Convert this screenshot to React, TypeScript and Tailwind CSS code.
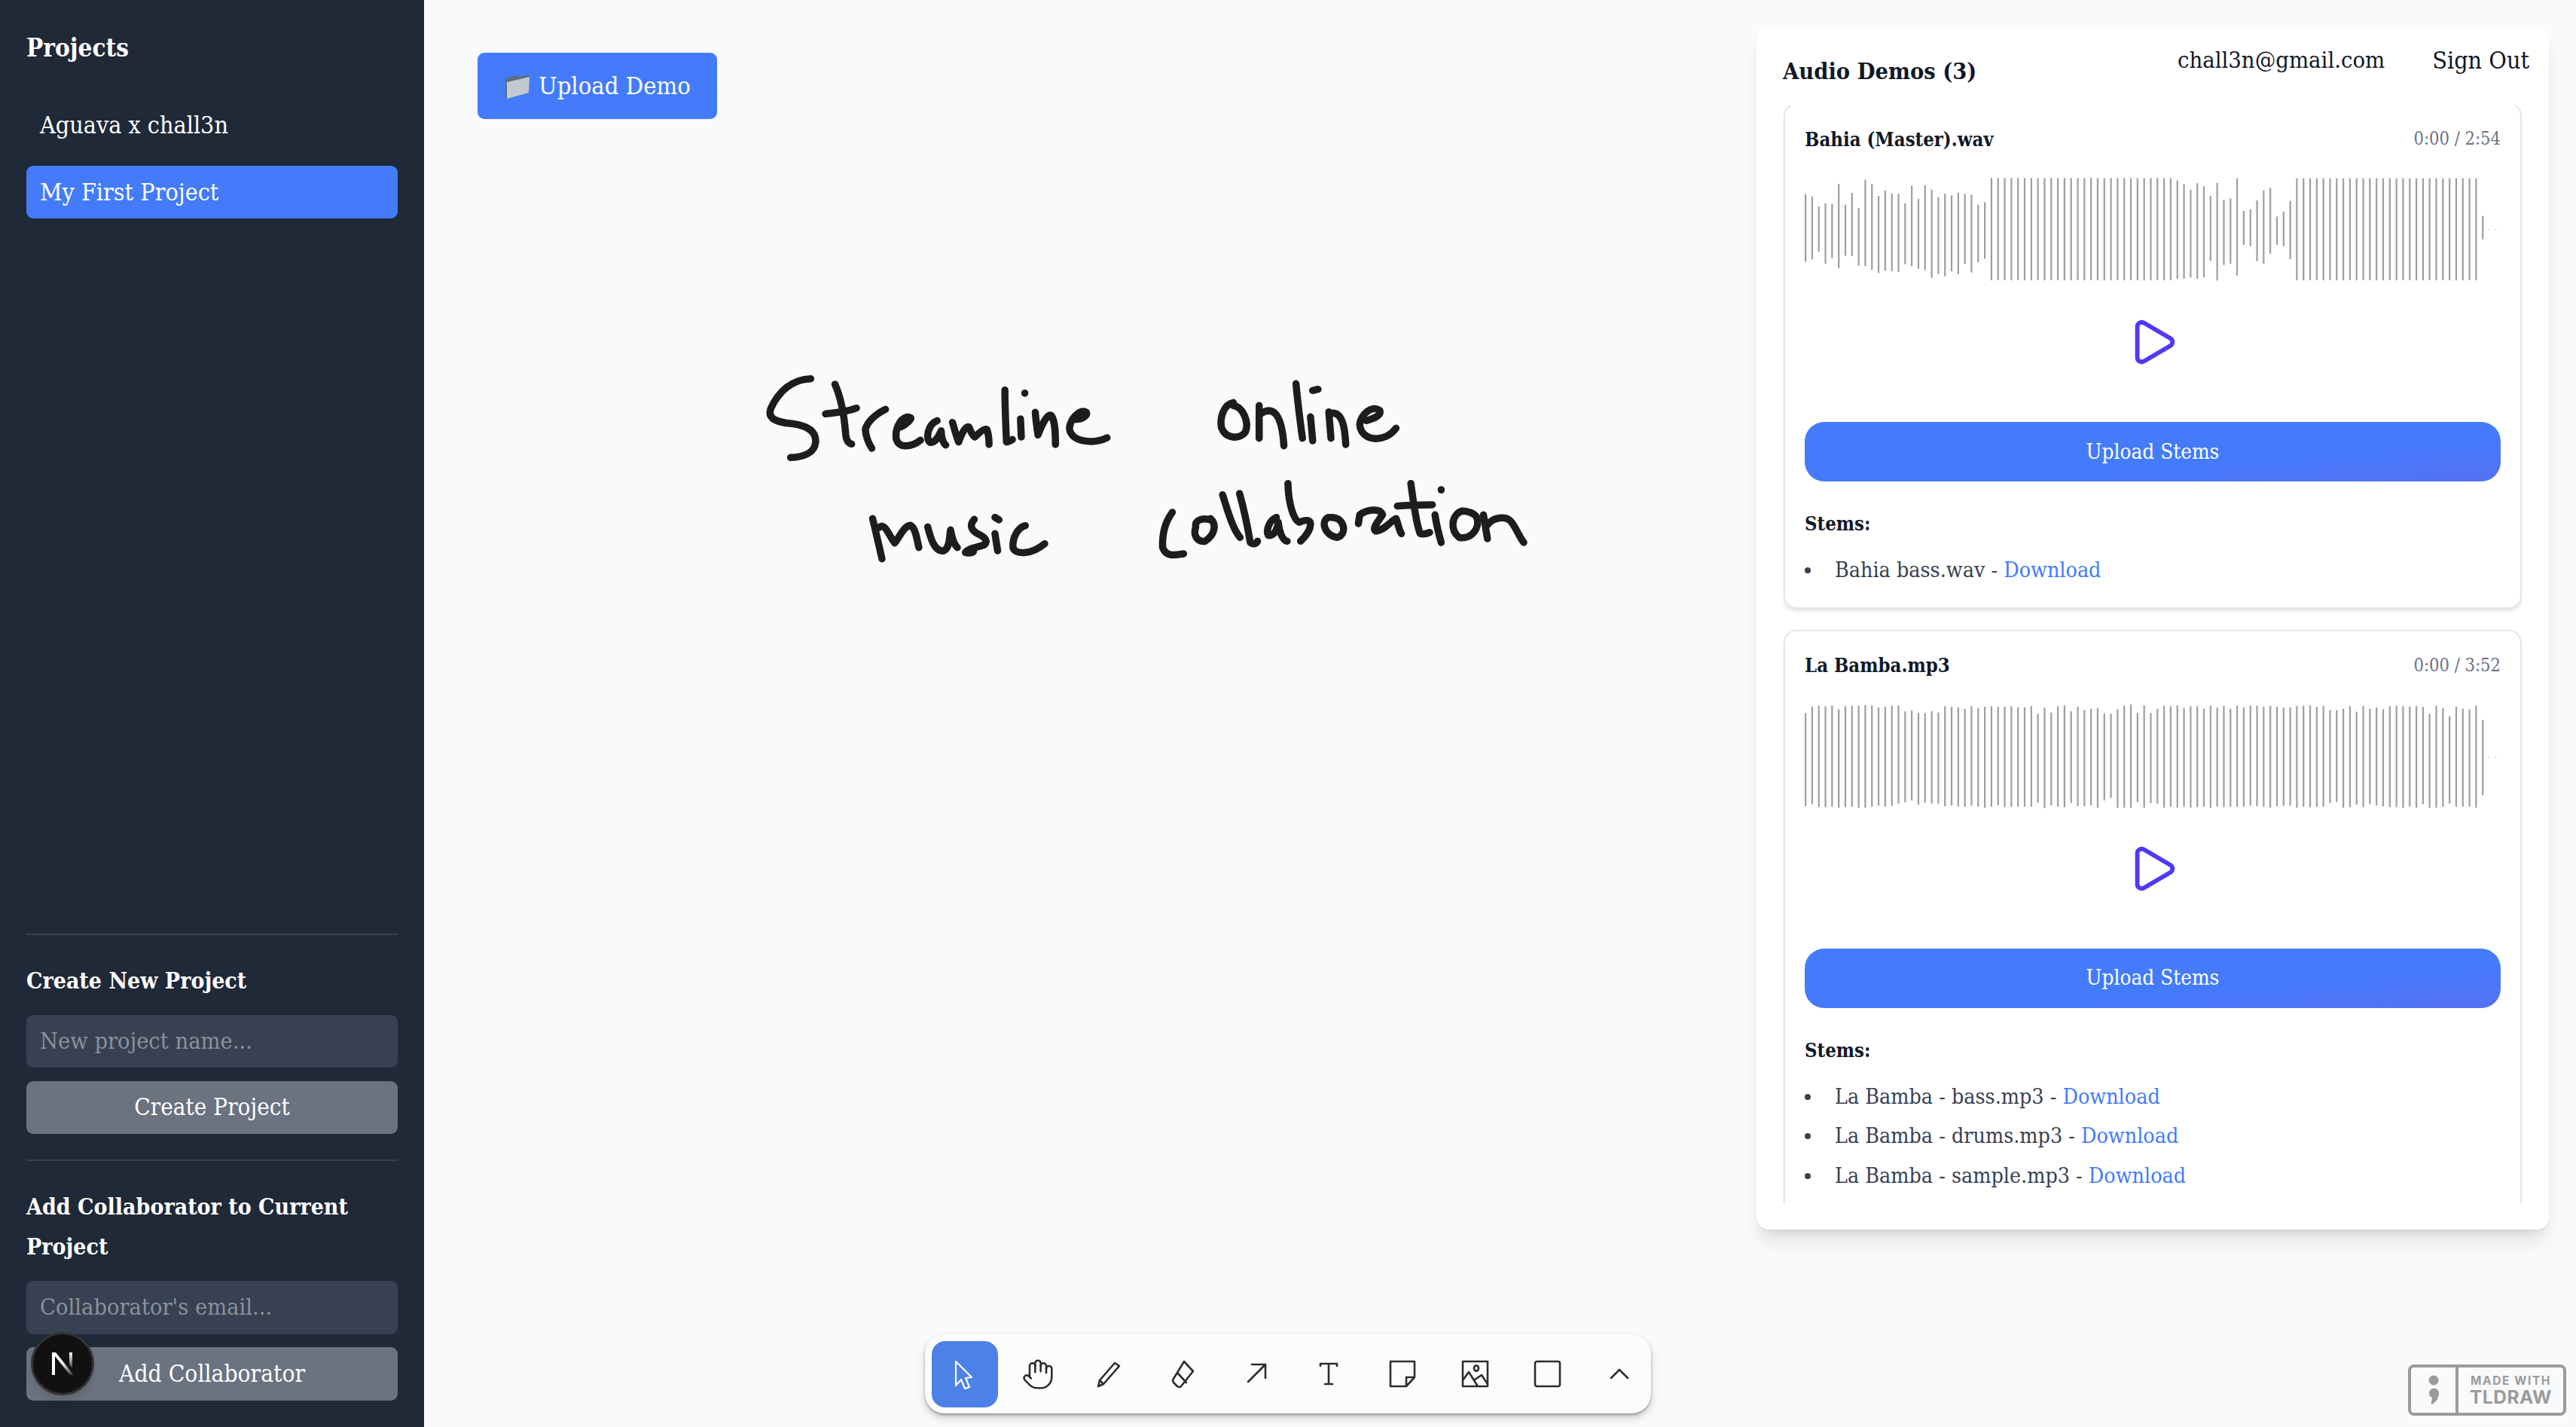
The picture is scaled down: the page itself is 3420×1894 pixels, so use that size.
import { Hand, Play } from "lucide-react";

const bahiaBars: number[][] = [
  [713, 982], [722, 973], [762, 942], [750, 990], [752, 968], [673, 1008], [755, 958], [708, 960], [768, 998], [655, 1000],
  [673, 1015], [720, 1027], [698, 1018], [710, 1020], [712, 1023], [750, 992], [680, 1000], [732, 1010], [678, 1015], [695, 1047],
  [725, 1032], [712, 1040], [718, 1020], [708, 1032], [712, 990], [715, 1025], [755, 985], [745, 970],
  ...Array.from({ length: 28 }, () => [649, 1056]),
  [658, 1050], [673, 1050], [695, 1045], [670, 1050], [682, 1045], [720, 978], [668, 1057], [735, 995], [730, 990], [650, 1037],
  [780, 915], [773, 920], [738, 980], [698, 990], [688, 950], [802, 915], [782, 920], [740, 972],
  ...Array.from({ length: 28 }, () => [650, 1056]),
  [800, 893],
];

const bambaBars: number[][] = [
  [197, 568], [172, 560], [168, 572], [170, 572], [167, 570], [182, 574], [170, 572], [168, 570], [168, 574], [165, 574],
  [168, 570], [175, 566], [173, 570], [168, 567], [167, 558], [190, 553], [187, 545], [197, 563], [197, 555], [190, 558],
  [195, 558], [170, 568], [173, 565], [175, 570], [180, 570], [170, 566], [178, 570], [172, 574], [170, 570], [172, 565],
  [172, 572], [170, 570], [174, 570], [175, 570], [170, 570], [200, 555], [176, 575], [195, 565], [170, 570], [167, 572],
  [190, 555], [172, 568], [185, 568], [180, 565], [178, 574], [198, 545], [200, 535], [182, 574], [168, 574], [163, 574],
  [197, 552], [167, 574], [197, 556], [180, 558], [168, 574], [170, 570], [167, 574], [177, 570], [170, 574], [170, 572],
  [180, 570], [168, 574], [176, 570], [168, 572], [180, 570], [168, 570], [175, 570], [168, 566], [168, 568], [172, 570],
  [168, 574], [172, 568], [175, 566], [175, 566], [170, 574], [168, 570], [167, 572], [172, 570], [168, 570], [185, 555],
  [185, 552], [180, 574], [170, 572], [192, 562], [168, 572], [180, 560], [175, 565], [182, 568], [170, 572], [168, 572],
  [170, 574], [172, 570], [170, 574], [172, 560], [200, 574], [168, 574], [178, 570], [210, 558], [172, 570], [180, 570],
  [182, 570], [167, 574], [225, 525],
];

// bars are measured off the screenshot, so base is the wave's top edge
const Waveform = ({ bars, base, dotY }: { bars: number[][]; base: number; dotY: number }) => (
  <svg width="924" height="138" className="block">
    {bars.map(([top, bottom], i) => (
      <rect key={i} x={i * 8.815} y={(top - base) / 3} width="2.2" height={(bottom - top) / 3} fill="#9e9e9e" />
    ))}
    <rect x={bars.length * 8.815} y={dotY} width="1.6" height="1.6" fill="#c4c4c4" />
    <rect x={(bars.length + 1) * 8.815} y={dotY} width="1.6" height="1.6" fill="#c4c4c4" />
  </svg>
);

const DemoCard = ({
  name,
  time,
  bars,
  base,
  dotY,
  stems,
}: {
  name: string;
  time: string;
  bars: number[][];
  base: number;
  dotY: number;
  stems: string[];
}) => (
  <div className="rounded-[17px] border-2 border-[#e5e7eb] bg-white px-[26px] pt-[27px] pb-[22px] shadow-md">
    <div className="flex h-[38px] items-center justify-between">
      <span className="text-[25.5px] font-semibold text-[#111827]">{name}</span>
      <span className="text-[23.5px] text-[#6b7280]">{time}</span>
    </div>
    <div className="mt-[32px]">
      <Waveform bars={bars} base={base} dotY={dotY} />
    </div>
    <div className="mt-[45px] flex justify-center">
      <Play size={70} strokeWidth={2} className="text-indigo-600" />
    </div>
    <button className="mt-[71px] h-[79px] w-full rounded-[26px] bg-gradient-to-br from-[#437bfb] from-60% to-[#5570f5] text-[27.7px] text-white">
      Upload Stems
    </button>
    <div className="mt-[36px] h-[40px] text-[25.5px] leading-[40px] font-semibold text-[#111827]">Stems:</div>
    <ul className="mt-[16px] text-[28.4px] leading-[52.5px] text-[#374151]">
      {stems.map((s) => (
        <li key={s} className="flex items-center">
          <span className="mr-[32px] h-[8px] w-[8px] rounded-full bg-[#374151]" />
          <span>
            {s} - <a className="text-[#437bfb]">Download</a>
          </span>
        </li>
      ))}
    </ul>
  </div>
);

const Sketch = () => (
  <svg
    className="absolute top-0 left-0"
    width="1600"
    height="800"
    viewBox="563 0 1600 800"
    fill="none"
    stroke="#1d1d1d"
    strokeLinecap="round"
    strokeLinejoin="round"
  >
    <g transform="translate(980 470) scale(0.357 0.3333)" strokeWidth="9.5">
      <path vectorEffect="non-scaling-stroke" d="M270 98 C200 100 150 150 122 215 C105 260 150 272 200 277 C260 285 290 310 288 350 C285 395 240 410 195 412" />
      <path vectorEffect="non-scaling-stroke" d="M360 120 C385 180 395 250 400 320 C402 340 410 355 422 358 M325 238 C360 232 400 232 440 215" />
      <path vectorEffect="non-scaling-stroke" d="M548 220 C510 240 480 270 473 300 C475 330 488 360 497 375" />
      <path vectorEffect="non-scaling-stroke" d="M605 290 C625 280 650 255 640 253 C610 240 585 290 587 330 C590 375 640 375 678 343" />
      <path vectorEffect="non-scaling-stroke" d="M740 265 C705 280 695 340 715 352 C740 350 748 320 755 305 C755 330 762 355 772 362" />
      <path vectorEffect="non-scaling-stroke" d="M797 272 C805 300 812 330 820 350 C830 320 845 285 858 290 C865 305 870 325 880 330 C895 315 915 295 925 300 C932 320 933 340 933 360" />
      <path vectorEffect="non-scaling-stroke" d="M992 143 C992 210 995 280 998 350 C1005 350 1012 345 1020 340" />
      <path vectorEffect="non-scaling-stroke" d="M1050 258 L1053 330 M1066 155 L1066 156" />
      <path vectorEffect="non-scaling-stroke" d="M1105 232 C1108 270 1112 300 1115 322 C1130 280 1150 235 1165 245 C1180 270 1180 320 1180 360" />
      <path vectorEffect="non-scaling-stroke" d="M1255 260 C1280 260 1300 245 1295 232 C1270 215 1235 260 1232 295 C1235 350 1320 360 1372 333" />
      <path vectorEffect="non-scaling-stroke" d="M500 655 C515 720 525 770 535 815 M525 690 C545 670 560 720 582 752 C600 730 615 685 640 682 C660 690 665 740 672 770" />
      <path vectorEffect="non-scaling-stroke" d="M705 688 C715 730 730 790 765 783 C790 770 785 720 790 700 C795 730 805 760 815 770" />
      <path vectorEffect="non-scaling-stroke" d="M878 658 C860 680 865 700 890 715 C920 730 930 745 915 760 C890 770 860 770 845 790 C860 795 875 790 875 785" />
      <path vectorEffect="non-scaling-stroke" d="M955 715 L965 783 M955 650 L970 660" />
      <path vectorEffect="non-scaling-stroke" d="M1068 683 C1040 690 1020 730 1022 770 C1030 800 1090 800 1140 755" />
    </g>
    <g transform="translate(1500 470) scale(0.357 0.3333)" strokeWidth="9.5">
      <path vectorEffect="non-scaling-stroke" d="M385 193 C350 200 335 250 340 290 C355 340 410 340 430 310 C445 270 420 210 385 205" />
      <path vectorEffect="non-scaling-stroke" d="M481 205 L481 335 M490 235 C530 210 565 230 573 365" />
      <path vectorEffect="non-scaling-stroke" d="M618 118 C625 200 635 280 642 335 M672 250 L680 345 M680 145 L700 140" />
      <path vectorEffect="non-scaling-stroke" d="M740 230 L748 335 M750 235 C790 230 800 290 803 360" />
      <path vectorEffect="non-scaling-stroke" d="M880 265 C910 255 935 245 930 225 C900 200 860 240 855 280 C860 350 950 355 990 295" />
      <path vectorEffect="non-scaling-stroke" d="M158 630 C130 670 120 720 122 770 C135 810 170 800 200 795" />
      <path vectorEffect="non-scaling-stroke" d="M300 660 C270 650 240 660 245 690 C235 720 250 750 280 745 C315 720 325 680 300 655" />
      <path vectorEffect="non-scaling-stroke" d="M345 560 C365 630 385 700 410 730 M408 555 C425 620 440 700 448 750 C460 760 470 755 475 745" />
      <path vectorEffect="non-scaling-stroke" d="M545 650 C520 660 505 700 515 722 C540 725 550 690 552 670 C555 700 565 740 585 745" />
      <path vectorEffect="non-scaling-stroke" d="M588 515 C590 600 610 660 630 670 C690 640 680 700 635 745" />
      <path vectorEffect="non-scaling-stroke" d="M740 650 C710 660 720 720 770 730 C810 720 800 650 750 650" />
      <path vectorEffect="non-scaling-stroke" d="M850 675 L855 640 C880 620 930 610 940 640 C920 670 900 695 915 705 C950 700 970 665 990 655 C1000 680 1000 700 1010 715" />
      <path vectorEffect="non-scaling-stroke" d="M1045 515 C1055 590 1065 680 1080 715 C1095 720 1105 715 1115 710 M995 605 C1040 600 1090 600 1125 600" />
      <path vectorEffect="non-scaling-stroke" d="M1135 640 C1140 680 1150 720 1158 750 M1158 540 L1158 541" />
      <path vectorEffect="non-scaling-stroke" d="M1235 625 C1195 640 1190 700 1225 730 C1270 740 1305 690 1290 650 C1280 630 1250 625 1235 625" />
      <path vectorEffect="non-scaling-stroke" d="M1315 640 L1330 735 M1330 680 C1350 650 1400 640 1420 670 C1440 700 1450 730 1465 750" />
    </g>
  </svg>
);

const ToolIcon = ({ children }: { children: React.ReactNode }) => (
  <svg width="40" height="40" viewBox="0 0 40 40" fill="none" stroke="#2d2d2d" strokeWidth="2.6" strokeLinejoin="round" strokeLinecap="round">
    {children}
  </svg>
);

const tools = [
  <Hand key="hand" size={44} strokeWidth={1.4} color="#2d2d2d" />,
  <ToolIcon key="pencil">
    <path d="M4 36 L6 28 L26 5 L32 9 L11 33 Z M6 28 L11 33" />
  </ToolIcon>,
  <ToolIcon key="eraser">
    <path d="M21 3 L33 16 L17 36 Q15 38 12 36 L7 31 Q5 28 7 26 Z M13 19 L24 31" />
  </ToolIcon>,
  <ToolIcon key="arrow">
    <path d="M9 30 L32 7 M14 7 L32 7 L32 25" />
  </ToolIcon>,
  <ToolIcon key="text">
    <path d="M9 9 L9 6 L31 6 L31 9 M20 6 L20 33 M15 33 L25 33" />
  </ToolIcon>,
  <ToolIcon key="note">
    <path d="M5 3 L37 3 L37 24 L26 36 L5 36 Z M37 24 L26 24 L26 36" />
  </ToolIcon>,
  <ToolIcon key="image">
    <path d="M4 3 L37 3 L37 36 L4 36 Z M4 28 L12 17 L24 36 M20 27 L29 21 L37 33" />
    <ellipse cx="22" cy="12" rx="3" ry="3.6" />
  </ToolIcon>,
  <ToolIcon key="rect">
    <rect x="3" y="3" width="33" height="33" rx="2.5" />
  </ToolIcon>,
];

export default function App() {
  return (
    <div className="relative flex h-screen w-full overflow-hidden bg-[#f9fafc] font-['DejaVu_Serif_Condensed','DejaVu_Serif',serif]">
      <aside className="flex w-[563px] shrink-0 flex-col bg-[#1f2937] p-[35px] text-white">
        <h2 className="flex h-[58px] items-center text-[33px] font-bold">Projects</h2>
        <div className="mt-[38px] flex h-[70px] items-center rounded-[9px] px-[18px] text-[32px]">Aguava x chall3n</div>
        <div className="mt-[19px] flex h-[70px] items-center rounded-[9px] bg-[#437bfb] px-[18px] text-[32px]">My First Project</div>

        <div className="mt-auto border-t-2 border-[#374151] pt-[34px]">
          <h3 className="h-[53px] text-[30px] leading-[53px] font-bold">Create New Project</h3>
          <input
            className="mt-[19px] h-[70px] w-full rounded-[9px] bg-[#374151] px-[18px] pb-[2px] text-[30.5px] placeholder:text-[#8b919c]"
            placeholder="New project name..."
          />
          <button className="mt-[18px] h-[70px] w-full rounded-[9px] bg-[#6b7280] pb-[2px] text-[31.2px]">Create Project</button>
        </div>

        <div className="mt-[34px] border-t-2 border-[#374151] pt-[34px]">
          <h3 className="text-[30px] leading-[53px] font-bold">Add Collaborator to Current Project</h3>
          <input
            className="mt-[19px] h-[71px] w-full rounded-[9px] bg-[#374151] px-[18px] pb-[2px] text-[30.5px] placeholder:text-[#8b919c]"
            placeholder="Collaborator's email..."
          />
          <button className="mt-[17px] h-[71px] w-full rounded-[9px] bg-[#6b7280] text-[31.5px]">Add Collaborator</button>
        </div>
      </aside>

      <main className="relative flex-1">
        <Sketch />

        <button className="absolute top-[70px] left-[71px] flex h-[88px] w-[318px] items-center gap-[11px] rounded-[9px] bg-[#437bfb] pl-[36px] text-[32.5px] font-medium text-white">
          <svg width="34" height="34" viewBox="0 0 34 34">
            <path d="M1 8 L1 34 L32 26 L33 2 L20 5 L16 3 L5 6 Z" fill="#5d6b7e" />
            <path d="M3 12 L33 5 L32 26 L3 34 Z" fill="#c3c9d0" />
          </svg>
          Upload Demo
        </button>

        <div className="absolute top-[35px] right-[36px] flex h-[1597px] w-[1052px] flex-col rounded-[17px] bg-white p-[35px] shadow-xl">
          <h2 className="flex h-[50px] shrink-0 items-center text-[30.5px] font-bold text-[#111827]">Audio Demos (3)</h2>
          <div className="mt-[20px] min-h-0 flex-1 overflow-hidden">
            <div className="-mt-[3px] flex flex-col gap-[28px] px-px">
              <DemoCard
                name="Bahia (Master).wav"
                time="0:00 / 2:54"
                bars={bahiaBars}
                base={648}
                dotY={68}
                stems={["Bahia bass.wav"]}
              />
              <DemoCard
                name="La Bamba.mp3"
                time="0:00 / 3:52"
                bars={bambaBars}
                base={163}
                dotY={69}
                stems={["La Bamba - bass.mp3", "La Bamba - drums.mp3", "La Bamba - sample.mp3"]}
              />
            </div>
          </div>
        </div>

        <div className="absolute top-[56px] right-[62px] flex items-center gap-[63px] text-[#111827]">
          <span className="text-[30.7px]">chall3n@gmail.com</span>
          <span className="text-[32px]">Sign Out</span>
        </div>

        <div className="absolute bottom-[18px] left-[665px] flex h-[105px] items-center gap-[8.7px] rounded-[26px] bg-[#fcfcfc] pl-[9px] shadow-[0_2px_3px_rgba(0,0,0,0.3),0_6px_12px_rgba(0,0,0,0.18)]">
          <div className="flex h-[88px] w-[88px] items-center justify-center rounded-[18px] bg-[#4c81e8]">
            <svg width="40" height="40" viewBox="0 0 40 40" fill="none" stroke="#fff" strokeWidth="2.2" strokeLinejoin="round">
              <path d="M8 3 L8 35 L15 27 L20 39 L26 37 L21 25 L29 24 Z" />
            </svg>
          </div>
          {tools.map((icon, i) => (
            <div key={i} className="flex h-[88px] w-[88px] items-center justify-center">
              {icon}
            </div>
          ))}
          <div className="flex h-[88px] w-[85px] items-center justify-center">
            <ToolIcon>
              <path d="M9 25 L20 14 L31 25" />
            </ToolIcon>
          </div>
        </div>

        <div className="absolute right-[13px] bottom-[15px] flex h-[68px] w-[210px] rounded-[8px] border-4 border-[#9b9b9b] font-['Inter',sans-serif] font-bold text-[#9b9b9b]">
          <div className="flex w-[63px] items-center justify-center border-r-4 border-[#9b9b9b]">
            <svg width="14" height="40" viewBox="0 0 14 40" fill="#9b9b9b">
              <circle cx="7" cy="7" r="6.5" />
              <path d="M1 24 a6.5 6.5 0 0 1 13 0 C14 31 9 37 5 39 C3 39 4 36 5 30 C2 29 1 27 1 24 Z" />
            </svg>
          </div>
          <div className="flex flex-1 flex-col items-center justify-center">
            <span className="text-[15.5px] leading-[19px] tracking-[1.6px]">MADE WITH</span>
            <span className="text-[24.5px] leading-[25px] tracking-[0.5px]">TLDRAW</span>
          </div>
        </div>
      </main>

      <div className="absolute top-[1768px] left-[41px] flex h-[84px] w-[84px] items-center justify-center rounded-full border-[3px] border-[#333] bg-[#111] shadow-lg">
        <svg width="36" height="36" viewBox="0 0 36 36">
          <defs>
            <linearGradient id="nfade" x1="0" y1="0" x2="1" y2="1">
              <stop offset="0.45" stopColor="#fff" />
              <stop offset="1" stopColor="#fff" stopOpacity="0.1" />
            </linearGradient>
            <linearGradient id="nbar" x1="0" y1="0" x2="0" y2="1">
              <stop offset="0" stopColor="#fff" />
              <stop offset="1" stopColor="#fff" stopOpacity="0.2" />
            </linearGradient>
          </defs>
          <path d="M4 3 L8 3 L8 33 L4 33 Z" fill="#fff" />
          <path d="M4 3 L9 3 L33 33 L28 33 Z" fill="url(#nfade)" />
          <path d="M27 3 L31 3 L31 24 L27 19 Z" fill="url(#nbar)" />
        </svg>
      </div>
    </div>
  );
}
